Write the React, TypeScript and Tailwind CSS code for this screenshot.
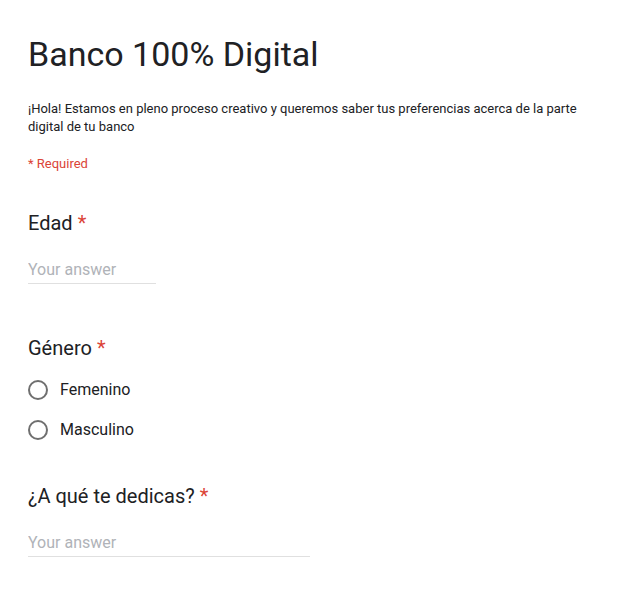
import React from "react";

const Star = () => <span className="text-[#db4437] ml-[5px]">*</span>;

function TextQuestion({ title, width }: { title: string; width: string }) {
  return (
    <div>
      <h2 className="text-[20px] leading-[28px] text-[#202124]">
        {title}
        <Star />
      </h2>
      <div className={`mt-[21px] ${width} border-b border-[#e0e0e0] pb-[1px]`}>
        <input
          type="text"
          placeholder="Your answer"
          className="w-full text-[16px] leading-[24px] text-[#202124] placeholder:text-[#b0b3b8] outline-none bg-transparent"
        />
      </div>
    </div>
  );
}

function RadioOption({ label }: { label: string }) {
  return (
    <label className="flex items-center gap-[12px] h-[20px]">
      <span className="w-[20px] h-[20px] rounded-full border-2 border-[#6f6f6f]" />
      <span className="text-[16px] text-[#202124]">{label}</span>
    </label>
  );
}

export default function App() {
  return (
    <div
      className="min-h-[591px] bg-white px-[28px] pt-[34px] pb-10"
      style={{ fontFamily: "Roboto, 'Liberation Sans', sans-serif" }}
    >
      <h1 className="text-[34px] leading-[40px] text-[#202124]">Banco 100% Digital</h1>
      <p className="mt-[26px] text-[13px] leading-[18px] text-[#202124]">
        ¡Hola! Estamos en pleno proceso creativo y queremos saber tus preferencias acerca de la parte digital de tu banco
      </p>
      <p className="mt-[20px] text-[13px] leading-[16px] text-[#db4437]">* Required</p>

      <div className="mt-[37px]">
        <TextQuestion title="Edad" width="w-[128px]" />
      </div>

      <div className="mt-[50px]">
        <h2 className="text-[20px] leading-[28px] text-[#202124]">
          Género
          <Star />
        </h2>
        <div className="mt-[18px] flex flex-col gap-[20px]">
          <RadioOption label="Femenino" />
          <RadioOption label="Masculino" />
        </div>
      </div>

      <div className="mt-[42px]">
        <TextQuestion title="¿A qué te dedicas?" width="w-[282px]" />
      </div>
    </div>
  );
}
